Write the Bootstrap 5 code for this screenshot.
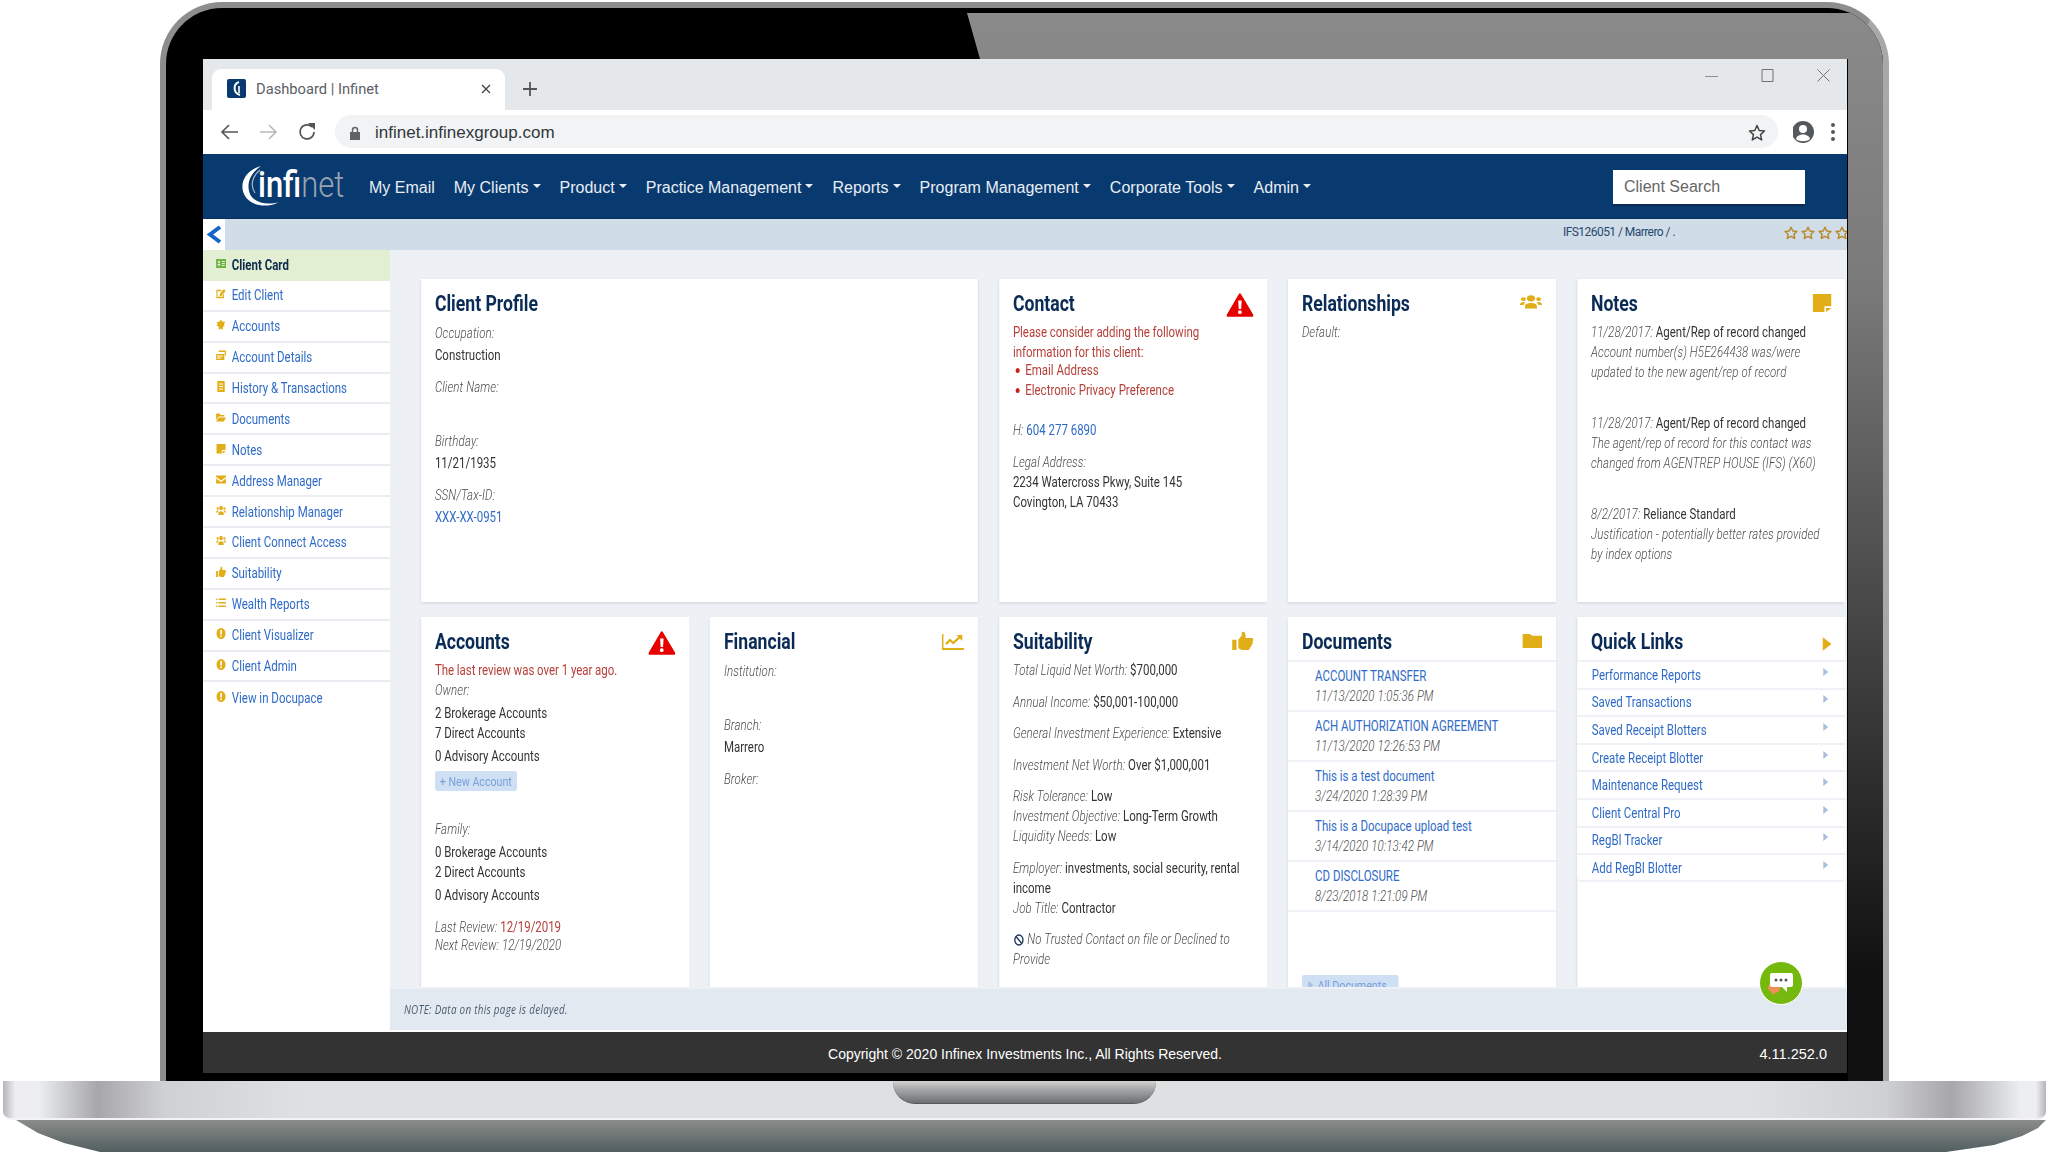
<!DOCTYPE html>
<html lang="en">
<head>
<meta charset="UTF-8">
<meta name="viewport" content="width=device-width, initial-scale=1.0">
<title>Dashboard | Infinet</title>
<link rel="stylesheet" href="https://cdn.jsdelivr.net/npm/bootstrap@5.3.0/dist/css/bootstrap.min.css">
<style>
html, body { background: #fff; overflow: hidden; }
body { font-family: "Liberation Sans", Arial, sans-serif; }

/* laptop frame */
.lid { margin: 2px 0 0 160px; width: 1729px; height: 1079px; background: #000; border: 6px solid #8d8d8d; border-right-color: #a8a8a8; border-bottom: 0; border-radius: 62px 62px 0 0; padding: 51px 36px 8px 37px; position: relative; overflow: hidden; }
.lid::before { content: ""; position: absolute; inset: 5px 0 0 0; background: linear-gradient(180deg, #8a8a8a 0, #7a7a7a 270px, #474747 600px, #111 960px); clip-path: polygon(801px 0, 100% 0, 100% 100%, 1682px 100%, 1682px 46px, 814px 46px); }
.screen { position: relative; z-index: 1; height: 100%; background: #fff; overflow: hidden; display: flex; flex-direction: column; }
.base { margin-left: 3px; width: 2043px; }
.base-top { height: 39px; border-radius: 0 0 8px 8px; border-bottom: 2px solid #f3f3f4; background: linear-gradient(90deg, #b5b5b8 0, #eeeef2 12px, #eceef0 35px, #a6a6ab 95px, #cfd0d4 160px, #dfe0e2 300px, #dfe0e2 calc(100% - 300px), #cfd0d4 calc(100% - 160px), #a6a6ab calc(100% - 95px), #eceef0 calc(100% - 25px), #eeeef2 calc(100% - 10px), #b5b5b8 100%); }
.notch { width: 263px; height: 23px; border-radius: 0 0 22px 22px; border-bottom: 1px solid #56595a; background: linear-gradient(180deg, #d2d2d3 0, #a9aaab 35%, #6c7070 100%); }
.base-low { height: 32px; margin-left: 13px; width: 2030px; background: linear-gradient(180deg, #8a8c8a 0, #515e5f 100%); clip-path: polygon(0 0, 100% 0, calc(100% - 8px) 8px, calc(100% - 24px) 16px, calc(100% - 52px) 25px, calc(100% - 100px) 32px, 84px 32px, 48px 23px, 22px 13px); }

/* browser chrome */
.tabstrip { height: 51px; background: #e5e8eb; padding: 10px 0 0 9px; flex-shrink: 0; }
.brow-tab { width: 293px; height: 41px; background: #fff; border-radius: 9px 9px 0 0; padding: 0 14px 2px 15px; font: 14.700px Roboto, sans-serif; color: #5b6066; }
.brow-tab .ttl { margin-left: 10px; }
.win-ctl { margin-left: auto; gap: 43px; padding: 0 17px 10px 0; color: #8a8f94; }
.toolbar { height: 44px; background: #fff; flex-shrink: 0; padding: 5px 0 6px 0; }
.nav-arrows { left: 17px; }
.omni { margin-left: 132px; width: 1443px; height: 33px; background: #f1f3f4; border-radius: 17px; padding: 2px 12px 0 15px; font-size: 17px; color: #33373b; }
.omni .url { margin-left: 15px; }

/* app navbar */
.app-nav { --bs-navbar-nav-link-padding-x: 9.500px; height: 65px; background: #083a70; border-bottom: 1px solid #0a2f5b; padding: 3px 42px 0 38px; flex-shrink: 0; }
.app-nav .navbar-brand { margin: -4px 13.500px 0 0; padding: 0; width: 105px; height: 42px; position: relative; display: block; }
.logo-txt { position: absolute; left: 17px; top: 0; font: 36px/40px Roboto, sans-serif; white-space: nowrap; transform: scaleX(.86); transform-origin: 0 0; }
.logo-txt b { font-weight: 500; color: #fff; }
.logo-txt span { font-weight: 300; color: #98a3b0; }
.app-nav .nav-link { color: #e9eef4; font-size: 16px; padding-top: 0; padding-bottom: 0; }
.srch { width: 192px; height: 36px; border: 0; border-bottom: 2px solid #0a2a52; border-radius: 0; font-size: 16px; padding: 0 11px; font-family: "Liberation Sans", sans-serif; }
.srch::placeholder { color: #666; }
.sub-bar { height: 31px; background: #d0dce8; flex-shrink: 0; font: 12px Roboto, sans-serif; letter-spacing: -.55px; color: #27486e; overflow: hidden; }
.back-btn { width: 22px; height: 100%; background: #fff; }
.crumb { margin-right: 109px; padding-bottom: 6px; }
.star-row { gap: 3px; margin: 0 -2px 3px 0; flex-shrink: 0; }

/* app body: the source picture is squeezed sideways, keep the flow inside at full width */
.app-wrap { height: 782px; flex-shrink: 0; overflow: hidden; }
.squeeze { width: 2004.900px; height: 782px; transform: scaleX(.82); transform-origin: 0 0; font: 14px/20px Roboto, sans-serif; color: #333; }
.side-col { width: 228px; flex-shrink: 0; background: #fff; }
.side-col .list-group-item { height: 30.900px; padding: 0 0 0 16px; border: 0; border-bottom: 2px solid #e9edf2; color: #2f6bc6; background: #fff; display: flex; align-items: center; gap: 7px; line-height: 1; }
.side-col .list-group-item.on { background: #e3efd2; color: #0d2a4a; font-weight: 700; border-bottom: 0; }
.side-ic { width: 12px; height: 11px; color: #e2ae17; flex-shrink: 0; margin-top: -3px; }
.on .side-ic { color: #6cb33f; }
.main-col { flex: 1; min-width: 0; display: flex; flex-direction: column; }
.cards-area { height: 737px; overflow: hidden; background: #edf0f5; padding: 29px 2.400px 0 37.800px; display: grid; grid-template-columns: repeat(5, 1fr); grid-template-rows: 323px 400px; column-gap: 25.600px; row-gap: 15px; }
.cards-gap { height: 2px; background: #edf0f5; }
.span-two { grid-column: span 2; }
.info-card { border: 0; border-radius: 0; box-shadow: 0 1px 3px rgba(0, 0, 0, .13); }
.info-head { height: 43px; padding: 13px 17px 0; display: flex; justify-content: space-between; align-items: flex-start; }
.info-head h5 { font: 700 21.500px/24px Roboto, sans-serif; color: #0a2b56; margin: 0; }
.info-body { padding: 0 17px; }
.lbl { font-style: italic; font-weight: 300; color: #4a4a4a; letter-spacing: .15px; }
.bad { color: #b5403a; letter-spacing: -.05px; }
.lnk { color: #2f6bc6; text-decoration: none; }
.fld { line-height: 22px; margin-bottom: 10px; }
.fld > div { min-height: 22px; }
.gold { color: #e2ae17; flex-shrink: 0; }
.top-1 { margin-top: 1px; }
.top-2 { margin-top: 2px; }
.top-4 { margin-top: 4px; }
.top-5 { margin-top: 5px; }
.top-7 { margin-top: 7px; }
.req-list { margin: -2px 0 0; padding: 0 0 0 15px; list-style: none; color: #b5403a; }
.req-list li { position: relative; }
.req-list li::before { content: ""; position: absolute; left: -12px; top: 8px; width: 5px; height: 5px; border-radius: 50%; background: #c4231b; }
.note-item { margin-bottom: 31px; }
.acct-g { margin-top: 3px; }
.rev-g { margin-top: 13px; line-height: 18px; }
.mini-btn { display: inline-flex; align-items: center; gap: 4px; background: #cfe0f5; color: #7ba1d8; border-radius: 3px; height: 20px; padding: 0 6px; font-size: 13px; line-height: 1; }
.suit-g { margin-bottom: 11.500px; }
.doc-list .list-group-item { height: 50px; padding: 4px 0 0 33px; border: 0; border-top: 2px solid #eef1f5; }
.doc-list .list-group-item:last-child { height: 52px; border-bottom: 2px solid #eef1f5; }
.doc-btn { margin: 63px 0 0 17px; width: 118px; height: 20px; border-radius: 3px 3px 0 0; gap: 5px; padding-left: 8px; justify-content: flex-start; }
.quick-list .list-group-item { height: 27.600px; padding: 0 17px 0 18px; border: 0; border-top: 2px solid #eef1f5; display: flex; justify-content: space-between; align-items: center; }
.quick-list .list-group-item:last-child { height: 29px; border-bottom: 2px solid #eef1f5; }
.quick-list a { color: #2f6bc6; text-decoration: none; }
.tri-r { width: 0; height: 0; border-left: 6px solid #a9bedd; border-top: 4.500px solid transparent; border-bottom: 4.500px solid transparent; margin: -6px 4px 0 0; }
.note-bar { height: 41px; background: #e2e9f1; padding-left: 17px; font: italic 12px "Open Sans", sans-serif; letter-spacing: .35px; color: #4b5d70; display: flex; align-items: center; }
.white-gap { height: 2px; background: #fff; }
.app-foot { height: 41px; background: #333; color: #fff; font-size: 14px; flex-shrink: 0; padding: 4px 20px 0; display: grid; grid-template-columns: 1fr auto 1fr; align-items: center; }
.foot-ver { font-size: 14.500px; text-align: right; }
.chat-fab { position: absolute; right: 44px; top: 902px; width: 44px; height: 44px; border-radius: 50%; background: #76b90e; border: 1px solid #fff; z-index: 3; }
</style>
</head>
<body>
<svg width="0" height="0" class="position-absolute">
  <defs>
    <g id="i-card"><path fill="currentColor" d="M0 2h24v18H0z"/><circle cx="7" cy="8" r="2.600" fill="#e3efd2"/><path fill="#e3efd2" d="M3 15c0-5 8-5 8 0zM14 6h7v2h-7zM14 10h7v2h-7zM14 14h7v2h-7z"/></g>
    <g id="i-edit"><path fill="none" stroke="currentColor" stroke-width="2.600" d="M18 13v6H2V5h11"/><path fill="currentColor" d="M9 12l10-10 4 4-10 10-5 1z"/></g>
    <g id="i-piggy"><path fill="currentColor" d="M12 1l3 4 7 1-3 5 2 3-4 1-1 6h-3l-1-3-2 3H7l-1-6-5-2 3-4-3-3 6 0z"/></g>
    <g id="i-money"><path fill="currentColor" d="M6 1h18v10h-3V4H6zM0 8h20v12H0z"/><path fill="#fff" d="M2 11h14v2H2zM2 15h10v2H2z"/></g>
    <g id="i-receipt"><path fill="currentColor" d="M3 0h18v22H3z"/><path fill="#fff" d="M7 5h10v2H7zM7 10h10v2H7zM7 15h10v2H7z"/></g>
    <g id="i-folderopen"><path fill="currentColor" d="M0 3h8l3 3h9v3H6L0 16zM6 11h18l-5 8H0z"/></g>
    <g id="i-note"><path fill="currentColor" d="M1 2h22v12h-9v7H1zM16 16h7l-7 6z"/></g>
    <g id="i-mail"><path fill="currentColor" d="M0 3h24v3L12 13 0 6zM0 9l12 7 12-7v10H0z"/></g>
    <g id="i-users"><circle cx="12" cy="6" r="4.400" fill="currentColor"/><circle cx="3.800" cy="7" r="2.700" fill="currentColor"/><circle cx="20.200" cy="7" r="2.700" fill="currentColor"/><path fill="currentColor" d="M5.500 20v-3c0-6 13-6 13 0v3zM0 15c0-4 4-5 6-3-1.500 1-2 2-2 3zM24 15c0-4-4-5-6-3 1.500 1 2 2 2 3z"/></g>
    <g id="i-thumb"><path fill="currentColor" d="M0 10h5v12H0zM7 10l4-5V1c3-1 5 2 4 7h7c3 0 2 3 1 4 1 2 0 3-1 4 0 2-1 3-2 3 0 2-1 3-3 3H11l-4-2z"/></g>
    <g id="i-list"><path fill="currentColor" d="M0 3h3v3H0zM6 3h18v3H6zM0 10h3v3H0zM6 10h18v3H6zM0 17h3v3H0zM6 17h18v3H6z"/></g>
    <g id="i-info"><path fill="currentColor" fill-rule="evenodd" d="M12 0a11 11 0 1 1 0 22 11 11 0 0 1 0-22zM10 4v9h4V4zM10 15v3h4v-3z"/></g>
    <g id="i-warn"><path fill="#e60000" stroke="#e60000" stroke-width="2.400" stroke-linejoin="round" d="M13.500 1.500L26 22.500H1.300z"/><path fill="#fff" d="M11.800 7.500h3.500l-.5 8.500h-2.500zM13.500 17.300a1.900 1.900 0 1 1 0 3.800 1.900 1.900 0 0 1 0-3.800z"/></g>
    <g id="i-star"><path fill="none" stroke="#b88a2a" stroke-width="1.500" stroke-linejoin="round" d="M7 1.200l1.800 3.800 4.100.5-3 2.800.8 4.100L7 10.400l-3.700 2 .8-4.100-3-2.800 4.100-.5z"/></g>
  </defs>
</svg>

<div class="lid">
  <div class="screen">
    <div class="tabstrip d-flex">
      <div class="brow-tab d-flex align-items-center">
        <svg width="19" height="19" viewBox="0 0 19 19"><rect width="19" height="19" rx="2" fill="#083a70"/><path fill="none" stroke="#fff" stroke-width="2" d="M12 3C6 5 6 14 13 16"/><path fill="none" stroke="#fff" stroke-width="1.600" d="M12 7v7"/></svg>
        <span class="ttl">Dashboard | Infinet</span>
        <svg class="ms-auto" width="10" height="10" viewBox="0 0 10 10"><path stroke="#444" stroke-width="1.300" d="M1 1l8 8M9 1l-8 8"/></svg>
      </div>
      <svg class="ms-3 mt-2" width="18" height="24" viewBox="0 0 18 24"><path stroke="#555" stroke-width="1.800" d="M9 5v14M2 12h14"/></svg>
      <div class="win-ctl d-flex align-items-start">
        <svg width="13" height="13" viewBox="0 0 13 13"><path stroke="#8a8f94" d="M0 7.500h13"/></svg>
        <svg width="13" height="13" viewBox="0 0 13 13"><path fill="none" stroke="#6d7277" d="M1 .5h11v12H1z"/></svg>
        <svg width="13" height="13" viewBox="0 0 13 13"><path stroke="#6d7277" d="M.5.5l12 12M12.500.5l-12 12"/></svg>
      </div>
    </div>
    <div class="toolbar d-flex align-items-center position-relative">
      <svg class="nav-arrows position-absolute top-50 translate-middle-y" width="120" height="20" viewBox="0 0 120 20"><path fill="none" stroke="#555" stroke-width="1.600" d="M2 10h16M9 3l-7 7 7 7"/><path fill="none" stroke="#b7b9bb" stroke-width="1.600" d="M40 10h16M49 3l7 7-7 7"/><path fill="none" stroke="#555" stroke-width="1.700" d="M92 5a7 7 0 1 0 2 5"/><path fill="#555" d="M88 1l7 0 0 7z"/></svg>
      <div class="omni d-flex align-items-center">
        <svg width="10" height="14" viewBox="0 0 10 14"><path fill="#5f6368" d="M0 6h10v8H0z"/><path fill="none" stroke="#5f6368" stroke-width="1.500" d="M2.500 6V4a2.500 2.500 0 0 1 5 0v2"/></svg>
        <span class="url">infinet.infinexgroup.com</span>
        <svg class="ms-auto" width="18" height="18" viewBox="0 0 18 18"><path fill="none" stroke="#444" stroke-width="1.500" stroke-linejoin="round" d="M9 1.500l2.200 5 5.300.5-4 3.600 1.200 5.300L9 13.100l-4.700 2.800 1.200-5.300-4-3.600 5.300-.5z"/></svg>
      </div>
      <svg class="ms-auto me-2" width="46" height="24" viewBox="0 0 46 24"><circle cx="10" cy="12" r="11" fill="#55595d"/><circle cx="10" cy="9" r="4" fill="#fff"/><path fill="#fff" d="M3 19c1-6 13-6 14 0-3 3-11 3-14 0z"/><circle cx="40" cy="5" r="2" fill="#55595d"/><circle cx="40" cy="12" r="2" fill="#55595d"/><circle cx="40" cy="19" r="2" fill="#55595d"/></svg>
    </div>

    <nav class="navbar navbar-expand app-nav">
      <a class="navbar-brand" href="#">
        <svg class="d-block" width="105" height="42" viewBox="0 0 105 42">
          <path fill="#fff" d="M20 1C5 5-2 18 3 29c4 9 15 13 27 11 3-.5 6-2 8-3-10 3-22 2-28-6C5 22 7 10 20 1z"/>
          <path fill="none" stroke="#aeb6c0" stroke-width="1.200" d="M19 5C11 11 9 21 14 28"/>
        </svg>
        <span class="logo-txt"><b>infi</b><span>net</span></span>
      </a>
      <ul class="navbar-nav">
        <li class="nav-item"><a class="nav-link" href="#">My Email</a></li>
        <li class="nav-item"><a class="nav-link dropdown-toggle" href="#">My Clients</a></li>
        <li class="nav-item"><a class="nav-link dropdown-toggle" href="#">Product</a></li>
        <li class="nav-item"><a class="nav-link dropdown-toggle" href="#">Practice Management</a></li>
        <li class="nav-item"><a class="nav-link dropdown-toggle" href="#">Reports</a></li>
        <li class="nav-item"><a class="nav-link dropdown-toggle" href="#">Program Management</a></li>
        <li class="nav-item"><a class="nav-link dropdown-toggle" href="#">Corporate Tools</a></li>
        <li class="nav-item"><a class="nav-link dropdown-toggle" href="#">Admin</a></li>
      </ul>
      <input class="form-control srch ms-auto" type="text" placeholder="Client Search">
    </nav>

    <div class="sub-bar d-flex align-items-center">
      <div class="back-btn d-flex align-items-center justify-content-center">
        <svg width="18" height="19" viewBox="0 0 18 19"><path fill="none" stroke="#1565c8" stroke-width="4" d="M15 2L5 9.500 15 17"/></svg>
      </div>
      <span class="crumb ms-auto">IFS126051 / Marrero / .</span>
      <div class="star-row d-flex">
        <svg width="14" height="14" viewBox="0 0 14 14"><use href="#i-star"/></svg>
        <svg width="14" height="14" viewBox="0 0 14 14"><use href="#i-star"/></svg>
        <svg width="14" height="14" viewBox="0 0 14 14"><use href="#i-star"/></svg>
        <svg width="14" height="14" viewBox="0 0 14 14"><use href="#i-star"/></svg>
      </div>
    </div>

    <div class="app-wrap">
      <div class="squeeze d-flex">
        <div class="side-col">
          <div class="list-group list-group-flush">
            <a href="#" class="list-group-item on"><svg class="side-ic" viewBox="0 0 24 22" preserveAspectRatio="none"><use href="#i-card"/></svg>Client Card</a>
            <a href="#" class="list-group-item"><svg class="side-ic" viewBox="0 0 24 22" preserveAspectRatio="none"><use href="#i-edit"/></svg>Edit Client</a>
            <a href="#" class="list-group-item"><svg class="side-ic" viewBox="0 0 24 22" preserveAspectRatio="none"><use href="#i-piggy"/></svg>Accounts</a>
            <a href="#" class="list-group-item"><svg class="side-ic" viewBox="0 0 24 22" preserveAspectRatio="none"><use href="#i-money"/></svg>Account Details</a>
            <a href="#" class="list-group-item"><svg class="side-ic" viewBox="0 0 24 22" preserveAspectRatio="none"><use href="#i-receipt"/></svg>History &amp; Transactions</a>
            <a href="#" class="list-group-item"><svg class="side-ic" viewBox="0 0 24 22" preserveAspectRatio="none"><use href="#i-folderopen"/></svg>Documents</a>
            <a href="#" class="list-group-item"><svg class="side-ic" viewBox="0 0 24 22" preserveAspectRatio="none"><use href="#i-note"/></svg>Notes</a>
            <a href="#" class="list-group-item"><svg class="side-ic" viewBox="0 0 24 22" preserveAspectRatio="none"><use href="#i-mail"/></svg>Address Manager</a>
            <a href="#" class="list-group-item"><svg class="side-ic" viewBox="0 0 24 22" preserveAspectRatio="none"><use href="#i-users"/></svg>Relationship Manager</a>
            <a href="#" class="list-group-item"><svg class="side-ic" viewBox="0 0 24 22" preserveAspectRatio="none"><use href="#i-users"/></svg>Client Connect Access</a>
            <a href="#" class="list-group-item"><svg class="side-ic" viewBox="0 0 24 22" preserveAspectRatio="none"><use href="#i-thumb"/></svg>Suitability</a>
            <a href="#" class="list-group-item"><svg class="side-ic" viewBox="0 0 24 22" preserveAspectRatio="none"><use href="#i-list"/></svg>Wealth Reports</a>
            <a href="#" class="list-group-item"><svg class="side-ic" viewBox="0 0 24 22" preserveAspectRatio="none"><use href="#i-info"/></svg>Client Visualizer</a>
            <a href="#" class="list-group-item"><svg class="side-ic" viewBox="0 0 24 22" preserveAspectRatio="none"><use href="#i-info"/></svg>Client Admin</a>
            <a href="#" class="list-group-item"><svg class="side-ic" viewBox="0 0 24 22" preserveAspectRatio="none"><use href="#i-info"/></svg>View in Docupace</a>
          </div>
        </div>

        <div class="main-col">
          <div class="cards-area">
            <div class="card info-card span-two">
              <div class="info-head"><h5>Client Profile</h5></div>
              <div class="info-body">
                <div class="fld"><div class="lbl">Occupation:</div><div>Construction</div></div>
                <div class="fld"><div class="lbl">Client Name:</div><div></div></div>
                <div class="fld"><div class="lbl">Birthday:</div><div>11/21/1935</div></div>
                <div class="fld"><div class="lbl">SSN/Tax-ID:</div><div><a class="lnk" href="#">XXX-XX-0951</a></div></div>
              </div>
            </div>

            <div class="card info-card">
              <div class="info-head"><h5>Contact</h5><svg class="top-1" width="33" height="24" viewBox="0 0 27 24" preserveAspectRatio="none"><use href="#i-warn"/></svg></div>
              <div class="info-body">
                <div class="bad">Please consider adding the following<br>information for this client:</div>
                <ul class="req-list">
                  <li>Email Address</li>
                  <li>Electronic Privacy Preference</li>
                </ul>
                <div class="mt-3 pt-1"><span class="lbl">H:</span> <a class="lnk" href="#">604 277 6890</a></div>
                <div class="lbl mt-2 pt-1">Legal Address:</div>
                <div>2234 Watercross Pkwy, Suite 145</div>
                <div>Covington, LA 70433</div>
              </div>
            </div>

            <div class="card info-card">
              <div class="info-head"><h5>Relationships</h5><svg class="gold top-2" width="27" height="16" viewBox="0 0 24 22" preserveAspectRatio="none"><use href="#i-users"/></svg></div>
              <div class="info-body"><div class="lbl">Default:</div></div>
            </div>

            <div class="card info-card">
              <div class="info-head"><h5>Notes</h5><svg class="gold top-2" width="23" height="18" viewBox="0 0 24 22" preserveAspectRatio="none"><path fill="currentColor" d="M0 0h24v15h-9v7H0zM17 17h7l-7 5z"/></svg></div>
              <div class="info-body">
                <div class="note-item"><span class="lbl">11/28/2017:</span> Agent/Rep of record changed<br><span class="lbl">Account number(s) H5E264438 was/were<br>updated to the new agent/rep of record</span></div>
                <div class="note-item"><span class="lbl">11/28/2017:</span> Agent/Rep of record changed<br><span class="lbl">The agent/rep of record for this contact was<br>changed from AGENTREP HOUSE (IFS) (X60)</span></div>
                <div class="note-item"><span class="lbl">8/2/2017:</span> Reliance Standard<br><span class="lbl">Justification - potentially better rates provided<br>by index options</span></div>
              </div>
            </div>

            <div class="card info-card">
              <div class="info-head"><h5>Accounts</h5><svg class="top-1" width="33" height="24" viewBox="0 0 27 24" preserveAspectRatio="none"><use href="#i-warn"/></svg></div>
              <div class="info-body">
                <div class="bad">The last review was over 1 year ago.</div>
                <div class="lbl">Owner:</div>
                <div class="acct-g">2 Brokerage Accounts</div>
                <div>7 Direct Accounts</div>
                <div class="acct-g">0 Advisory Accounts</div>
                <div class="mini-btn top-5">+ New Account</div>
                <div class="lbl mt-4 pt-1">Family:</div>
                <div class="acct-g">0 Brokerage Accounts</div>
                <div>2 Direct Accounts</div>
                <div class="acct-g">0 Advisory Accounts</div>
                <div class="lbl rev-g"><span>Last Review:</span> <span class="bad fst-normal fw-normal">12/19/2019</span></div>
                <div class="lbl rev-g mt-0">Next Review: 12/19/2020</div>
              </div>
            </div>

            <div class="card info-card">
              <div class="info-head"><h5>Financial</h5><svg class="gold top-4" width="27" height="16" viewBox="0 0 27 16" preserveAspectRatio="none"><path fill="none" stroke="currentColor" stroke-width="2" d="M1 0v15h26"/><path fill="none" stroke="currentColor" stroke-width="2.400" d="M5 10l5-4 4 3 8-6"/><path fill="currentColor" d="M18 1h7v6z"/></svg></div>
              <div class="info-body">
                <div class="fld"><div class="lbl">Institution:</div><div></div></div>
                <div class="fld"><div class="lbl">Branch:</div><div>Marrero</div></div>
                <div class="fld"><div class="lbl">Broker:</div><div></div></div>
              </div>
            </div>

            <div class="card info-card">
              <div class="info-head"><h5>Suitability</h5><svg class="gold top-1" width="26" height="19" viewBox="0 0 24 22" preserveAspectRatio="none"><use href="#i-thumb"/></svg></div>
              <div class="info-body">
                <div class="suit-g"><span class="lbl">Total Liquid Net Worth:</span> $700,000</div>
                <div class="suit-g"><span class="lbl">Annual Income:</span> $50,001-100,000</div>
                <div class="suit-g"><span class="lbl">General Investment Experience:</span> Extensive</div>
                <div class="suit-g"><span class="lbl">Investment Net Worth:</span> Over $1,000,001</div>
                <div class="suit-g"><span class="lbl">Risk Tolerance:</span> Low<br><span class="lbl">Investment Objective:</span> Long-Term Growth<br><span class="lbl">Liquidity Needs:</span> Low</div>
                <div class="suit-g"><span class="lbl">Employer:</span> investments, social security, rental income<br><span class="lbl">Job Title:</span> Contractor</div>
                <div class="lbl"><svg width="14" height="12" viewBox="0 0 14 12" preserveAspectRatio="none"><circle cx="7" cy="6" r="5" fill="none" stroke="#1d3556" stroke-width="1.600"/><path stroke="#1d3556" stroke-width="1.600" d="M3.500 2.500l7 7"/></svg> No Trusted Contact on file or Declined to Provide</div>
              </div>
            </div>

            <div class="card info-card">
              <div class="info-head"><h5>Documents</h5><svg class="gold top-4" width="24" height="14" viewBox="0 0 24 16" preserveAspectRatio="none"><path fill="currentColor" d="M0 0h9l3 2h12v14H0z"/></svg></div>
              <div class="list-group list-group-flush doc-list">
                <div class="list-group-item"><a class="lnk" href="#">ACCOUNT TRANSFER</a><div class="lbl">11/13/2020 1:05:36 PM</div></div>
                <div class="list-group-item"><a class="lnk" href="#">ACH AUTHORIZATION AGREEMENT</a><div class="lbl">11/13/2020 12:26:53 PM</div></div>
                <div class="list-group-item"><a class="lnk" href="#">This is a test document</a><div class="lbl">3/24/2020 1:28:39 PM</div></div>
                <div class="list-group-item"><a class="lnk" href="#">This is a Docupace upload test</a><div class="lbl">3/14/2020 10:13:42 PM</div></div>
                <div class="list-group-item"><a class="lnk" href="#">CD DISCLOSURE</a><div class="lbl">8/23/2018 1:21:09 PM</div></div>
              </div>
              <div class="mini-btn doc-btn"><span class="tri-r m-0"></span>All Documents</div>
            </div>

            <div class="card info-card">
              <div class="info-head"><h5>Quick Links</h5><svg class="gold top-7" width="11" height="14" viewBox="0 0 11 14" preserveAspectRatio="none"><path fill="currentColor" d="M0 0l11 7-11 7z"/></svg></div>
              <div class="list-group list-group-flush quick-list">
                <div class="list-group-item"><a href="#">Performance Reports</a><span class="tri-r"></span></div>
                <div class="list-group-item"><a href="#">Saved Transactions</a><span class="tri-r"></span></div>
                <div class="list-group-item"><a href="#">Saved Receipt Blotters</a><span class="tri-r"></span></div>
                <div class="list-group-item"><a href="#">Create Receipt Blotter</a><span class="tri-r"></span></div>
                <div class="list-group-item"><a href="#">Maintenance Request</a><span class="tri-r"></span></div>
                <div class="list-group-item"><a href="#">Client Central Pro</a><span class="tri-r"></span></div>
                <div class="list-group-item"><a href="#">RegBI Tracker</a><span class="tri-r"></span></div>
                <div class="list-group-item"><a href="#">Add RegBI Blotter</a><span class="tri-r"></span></div>
              </div>
            </div>
          </div>
          <div class="cards-gap"></div>
          <div class="note-bar">NOTE: Data on this page is delayed.</div>
          <div class="white-gap"></div>
        </div>
      </div>
    </div>

    <div class="app-foot">
      <span></span>
      <div>Copyright &copy; 2020 Infinex Investments Inc., All Rights Reserved.</div>
      <div class="foot-ver">4.11.252.0</div>
    </div>

    <div class="chat-fab d-flex align-items-center justify-content-center">
      <svg width="28" height="24" viewBox="0 0 28 24"><path fill="#ee8f5c" d="M1 17a5 5 0 0 1 5-5h3a5 5 0 0 1 1 9.500L4 24l1-3a5 5 0 0 1-4-4z"/><path fill="#fff" d="M5 2h19a2 2 0 0 1 2 2v10a2 2 0 0 1-2 2h-4v5l-5-5H5a2 2 0 0 1-2-2V4a2 2 0 0 1 2-2z"/><circle cx="9" cy="9" r="1.500" fill="#555"/><circle cx="14" cy="9" r="1.500" fill="#555"/><circle cx="19" cy="9" r="1.500" fill="#555"/></svg>
    </div>
  </div>
</div>

<div class="base">
  <div class="base-top d-flex justify-content-center"><div class="notch"></div></div>
  <div class="base-low"></div>
</div>

<script src="https://cdn.jsdelivr.net/npm/bootstrap@5.3.0/dist/js/bootstrap.bundle.min.js"></script>
</body>
</html>
